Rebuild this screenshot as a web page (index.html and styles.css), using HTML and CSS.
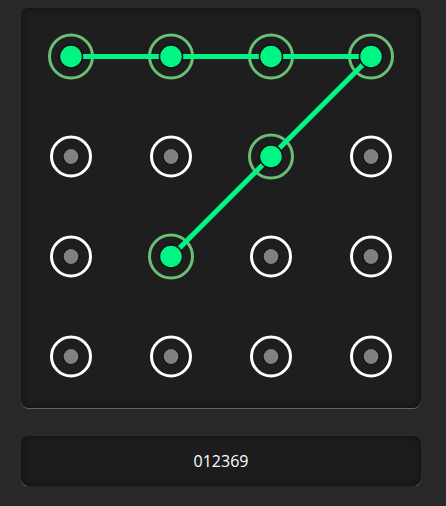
FILE: index.html
```html
<!DOCTYPE html>
<html>
<head>
<meta charset="utf-8">
<link rel="stylesheet" href="styles.css">
</head>
<body>
<div class="page">
  <div class="board">
    <svg class="grid" width="400" height="400" viewBox="0 0 400 400">
      <g class="rings">
        <circle class="ring on" cx="50" cy="48.5" r="21.5"/>
        <circle class="ring on" cx="150" cy="48.5" r="21.5"/>
        <circle class="ring on" cx="250" cy="48.5" r="21.5"/>
        <circle class="ring on" cx="350" cy="48.5" r="21.5"/>
        <circle class="ring" cx="50" cy="148.5" r="19.5"/>
        <circle class="ring" cx="150" cy="148.5" r="19.5"/>
        <circle class="ring on" cx="250" cy="148.5" r="21.5"/>
        <circle class="ring" cx="350" cy="148.5" r="19.5"/>
        <circle class="ring" cx="50" cy="248.5" r="19.5"/>
        <circle class="ring on" cx="150" cy="248.5" r="21.5"/>
        <circle class="ring" cx="250" cy="248.5" r="19.5"/>
        <circle class="ring" cx="350" cy="248.5" r="19.5"/>
        <circle class="ring" cx="50" cy="348.5" r="19.5"/>
        <circle class="ring" cx="150" cy="348.5" r="19.5"/>
        <circle class="ring" cx="250" cy="348.5" r="19.5"/>
        <circle class="ring" cx="350" cy="348.5" r="19.5"/>
      </g>
      <polyline class="path" points="50,48.5 150,48.5 250,48.5 350,48.5 250,148.5 150,248.5"/>
      <g class="dots">
        <circle class="dot on" cx="50" cy="48.5" r="11.5"/>
        <circle class="dot on" cx="150" cy="48.5" r="11.5"/>
        <circle class="dot on" cx="250" cy="48.5" r="11.5"/>
        <circle class="dot on" cx="350" cy="48.5" r="11.5"/>
        <circle class="dot" cx="50" cy="148.5" r="8"/>
        <circle class="dot" cx="150" cy="148.5" r="8"/>
        <circle class="dot on" cx="250" cy="148.5" r="11.5"/>
        <circle class="dot" cx="350" cy="148.5" r="8"/>
        <circle class="dot" cx="50" cy="248.5" r="8"/>
        <circle class="dot on" cx="150" cy="248.5" r="11.5"/>
        <circle class="dot" cx="250" cy="248.5" r="8"/>
        <circle class="dot" cx="350" cy="248.5" r="8"/>
        <circle class="dot" cx="50" cy="348.5" r="8"/>
        <circle class="dot" cx="150" cy="348.5" r="8"/>
        <circle class="dot" cx="250" cy="348.5" r="8"/>
        <circle class="dot" cx="350" cy="348.5" r="8"/>
      </g>
    </svg>
  </div>
  <div class="output">012369</div>
</div>
</body>
</html>
```

FILE: styles.css
```css
html, body {
  margin: 0;
  padding: 0;
  background: #282828;
}
.page {
  padding: 8px 0 0 21px;
  display: flex;
  flex-direction: column;
  gap: 28px;
}
.board {
  width: 400px;
  height: 400px;
  border-radius: 8px;
  background: #1e1e1e;
  box-shadow: inset 0 0 6px rgba(0, 0, 0, 0.55), 0 1px 0 rgba(255, 255, 255, 0.28);
}
.grid {
  display: block;
}
.ring {
  fill: none;
  stroke: #ffffff;
  stroke-width: 3;
}
.ring.on {
  stroke: #6abf74;
}
.path {
  fill: none;
  stroke: #00f584;
  stroke-width: 5;
  stroke-linejoin: miter;
}
.dot {
  fill: #808080;
  stroke: #111111;
  stroke-width: 1.2;
}
.dot.on {
  fill: #00f584;
  stroke: #111111;
  stroke-width: 1.5;
}
.output {
  width: 400px;
  height: 50px;
  border-radius: 8px;
  background: #1c1c1c;
  box-shadow: inset 0 0 6px rgba(0, 0, 0, 0.55), 0 1px 0 rgba(255, 255, 255, 0.28);
  display: flex;
  align-items: center;
  justify-content: center;
  color: #ffffff;
  font-family: "Open Sans", "Noto Sans", sans-serif;
  font-size: 16px;
}
```
